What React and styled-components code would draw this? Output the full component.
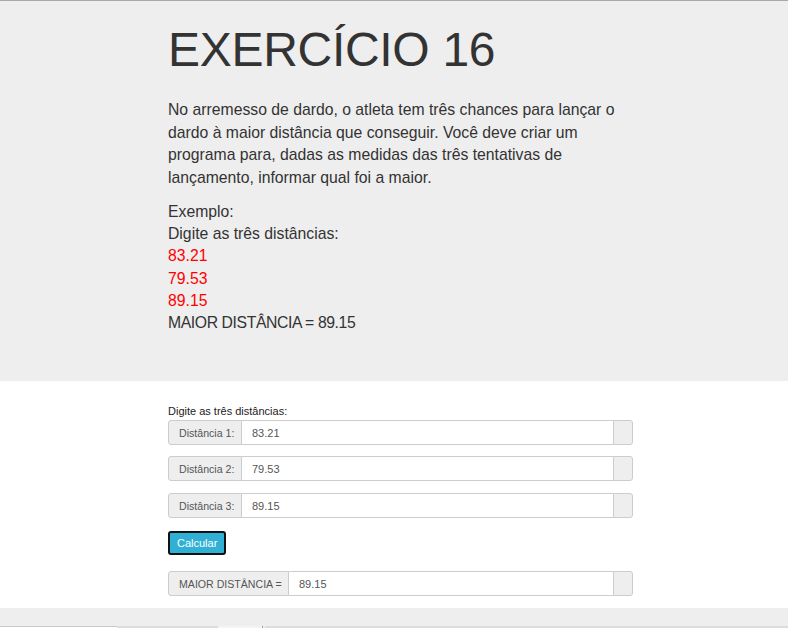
import React from "react";
import styled, { createGlobalStyle } from "styled-components";

const GlobalStyle = createGlobalStyle`
  html, body { margin: 0; padding: 0; background: #fff; }
  body { font-family: "Liberation Sans", Arial, sans-serif; color: #333; }
  * { box-sizing: border-box; }
`;

const Page = styled.div`
  border-top: 1px solid #a9a9a9;
  display: flex;
  flex-direction: column;
`;

const Jumbotron = styled.section`
  background: #eeeeee;
  height: 380px;
  padding-top: 21px;
`;

const Container = styled.div`
  width: 465px;
  margin-left: 168px;
  display: flex;
  flex-direction: column;
`;

const Title = styled.h1`
  margin: 0;
  font-size: 48px;
  line-height: 55px;
  font-weight: 400;
  color: #333;
  letter-spacing: -0.3px;
`;

const Lead = styled.p`
  margin: 22px 0 0;
  font-size: 15.75px;
  line-height: 22.7px;
  color: #333;
`;

const Example = styled.div`
  margin-top: 11px;
  font-size: 15.75px;
  line-height: 22.3px;
  color: #333;
  display: flex;
  flex-direction: column;
`;

const Line = styled.span`
  color: ${(p) => (p.$red ? "#ff0000" : "#333")};
  letter-spacing: ${(p) => (p.$caps ? "-0.4px" : "0")};
`;

const FormSection = styled.section`
  padding-top: 24px;
  height: 227px;
`;

const Label = styled.div`
  font-size: 11px;
  line-height: 13px;
  color: #222;
  margin-bottom: 2px;
`;

const Group = styled.div`
  display: flex;
  height: 25px;
  margin-top: ${(p) => p.$mt || 0}px;
`;

const Addon = styled.span`
  display: flex;
  align-items: center;
  width: ${(p) => p.$w}px;
  padding-left: 10px;
  background: #eeeeee;
  border: 1px solid #cccccc;
  border-radius: 3px 0 0 3px;
  font-size: 10.6px;
  color: #555;
  white-space: nowrap;
`;

const Field = styled.input`
  flex: 1;
  min-width: 0;
  height: 100%;
  border: 1px solid #cccccc;
  border-left: none;
  border-right: none;
  padding: 0 0 0 10px;
  margin: 0;
  font-family: "Liberation Sans", Arial, sans-serif;
  font-size: 11px;
  color: #555;
  background: #fff;
  outline: none;
`;

const EndAddon = styled.span`
  width: 20px;
  background: #eeeeee;
  border: 1px solid #cccccc;
  border-radius: 0 3px 3px 0;
`;

const Button = styled.button`
  margin-top: 13px;
  height: 24px;
  padding: 0 7px;
  align-self: flex-start;
  background: #31b0d5;
  color: #fff;
  border: 2px solid #111;
  border-radius: 3px;
  font-family: "Liberation Sans", Arial, sans-serif;
  font-size: 11px;
  cursor: pointer;
`;

const Footer = styled.footer`
  height: 20px;
  background: #eeeeee;
  display: flex;
  flex-direction: column;
  justify-content: flex-end;
`;

const Strip = styled.div`
  display: flex;
  height: 2px;
`;

const Seg = styled.span`
  width: ${(p) => (p.$w ? `${p.$w}px` : "auto")};
  flex: ${(p) => (p.$w ? "none" : 1)};
  background: ${(p) => p.$bg};
  border-top: ${(p) => (p.$line ? "1px solid #c8c8c8" : "none")};
  border-left: ${(p) => (p.$divider ? "1px solid #999" : "none")};
`;

function InputRow({ label, value, width, mt }) {
  return (
    <Group $mt={mt}>
      <Addon $w={width}>{label}</Addon>
      <Field readOnly value={value} />
      <EndAddon />
    </Group>
  );
}

export default function App() {
  return (
    <>
      <GlobalStyle />
      <Page>
        <Jumbotron>
          <Container>
            <Title>EXERCÍCIO 16</Title>
            <Lead>
              No arremesso de dardo, o atleta tem três chances para lançar o
              dardo à maior distância que conseguir. Você deve criar um
              programa para, dadas as medidas das três tentativas de
              lançamento, informar qual foi a maior.
            </Lead>
            <Example>
              <Line>Exemplo:</Line>
              <Line>Digite as três distâncias:</Line>
              <Line $red>83.21</Line>
              <Line $red>79.53</Line>
              <Line $red>89.15</Line>
              <Line $caps>MAIOR DISTÂNCIA = 89.15</Line>
            </Example>
          </Container>
        </Jumbotron>
        <FormSection>
          <Container>
            <Label>Digite as três distâncias:</Label>
            <InputRow label="Distância 1:" value="83.21" width={74} />
            <InputRow label="Distância 2:" value="79.53" width={74} mt={11} />
            <InputRow label="Distância 3:" value="89.15" width={74} mt={12} />
            <Button>Calcular</Button>
            <Group $mt={16}>
              <Addon $w={121}>MAIOR DISTÂNCIA =</Addon>
              <Field readOnly value="89.15" />
              <EndAddon />
            </Group>
          </Container>
        </FormSection>
        <Footer>
          <Strip>
            <Seg $w={117} $bg="#ffffff" $line />
            <Seg $w={101} $bg="#dddddd" />
            <Seg $w={44} $bg="#f4f4f4" />
            <Seg $w={3} $bg="#eeeeee" $divider />
            <Seg $bg="#dddddd" />
          </Strip>
        </Footer>
      </Page>
    </>
  );
}
